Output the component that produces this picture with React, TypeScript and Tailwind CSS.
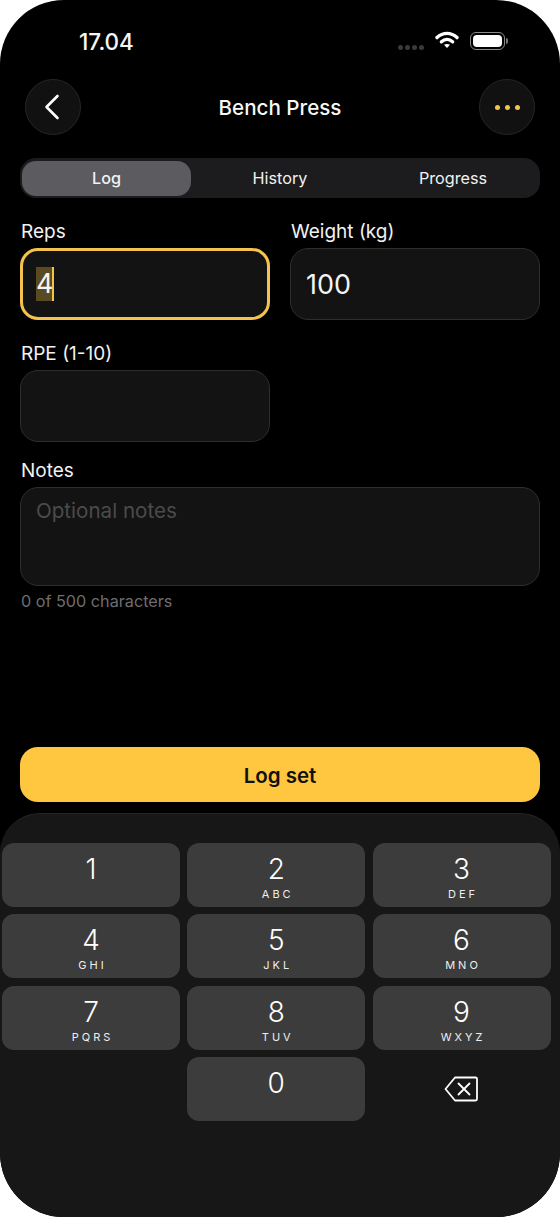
import React from 'react';

const keys = [
  { n: '1', l: '' },
  { n: '2', l: 'ABC' },
  { n: '3', l: 'DEF' },
  { n: '4', l: 'GHI' },
  { n: '5', l: 'JKL' },
  { n: '6', l: 'MNO' },
  { n: '7', l: 'PQRS' },
  { n: '8', l: 'TUV' },
  { n: '9', l: 'WXYZ' },
];

const Key: React.FC<{ n: string; l: string }> = ({ n, l }) => (
  <div className="h-[64px] rounded-[12px] bg-[#3c3c3c] flex flex-col items-center pt-[8px] text-white">
    <span className="text-[28px] leading-[36px] font-light">{n}</span>
    <span className="text-[11px] leading-[14px] tracking-[3px] pl-[3px] text-[#eeeeee]">{l}</span>
  </div>
);

const Field: React.FC<{ label: string; children?: React.ReactNode; focus?: boolean }> = ({ label, children, focus }) => (
  <div className="flex flex-col">
    <span className="text-[19px] leading-[24px] text-[#f2f2f2] pl-[1px] pt-[1px] mb-[4px]">{label}</span>
    <div className={`h-[72px] rounded-[18px] bg-[#131313] flex items-center text-[27px] text-[#f4f4f4] ${focus ? 'border-[3px] border-[#f5c34b] px-[13px]' : 'border border-[#2e2e2e] px-[15px] pt-[2px]'}`}>
      {children}
    </div>
  </div>
);

export default function App() {
  return (
    <div className="w-[560px] h-[1217px] bg-white font-['Inter',sans-serif]">
      <div className="w-full h-full bg-black rounded-[64px] overflow-hidden flex flex-col">
        {/* status bar */}
        <div className="h-[79px] shrink-0 flex justify-between pl-[79px] pr-[52px] pt-[27px]">
          <span className="text-[22.5px] leading-[30px] font-medium text-[#f5f5f5]">17.04</span>
          <div className="flex items-start gap-[9px] pt-[5px]">
            <div className="flex gap-[2px] mt-[13px] mr-[2px]">
              <span className="w-[5px] h-[5px] rounded-full bg-[#3a3a3a]" />
              <span className="w-[5px] h-[5px] rounded-full bg-[#3a3a3a]" />
              <span className="w-[5px] h-[5px] rounded-full bg-[#3a3a3a]" />
              <span className="w-[5px] h-[5px] rounded-full bg-[#3a3a3a]" />
            </div>
            <svg width="24" height="19" viewBox="0 0 24 19" fill="none" stroke="white" strokeWidth="3.4" strokeLinecap="round" className="mt-[-1px]">
              <path d="M2 6.6C8 1 16 1 22 6.6" />
              <path d="M6.4 10.8C9.8 7.8 14.2 7.8 17.6 10.8" />
              <path d="M12 17l-3-3.2c1.8-1.2 4.2-1.2 6 0z" fill="white" stroke="none" />
            </svg>
            <div className="flex items-center gap-[1px] ml-[2px]">
              <div className="w-[35px] h-[18px] rounded-[6px] border border-[#8a8a8a] p-[2px]">
                <div className="w-full h-full rounded-[4px] bg-white" />
              </div>
              <div className="w-[2px] h-[6px] rounded-r-full bg-[#777]" />
            </div>
          </div>
        </div>

        {/* header */}
        <div className="h-[56px] shrink-0 mx-[25px] flex items-center justify-between">
          <div className="w-[56px] h-[56px] rounded-full bg-[#111111] border border-[#262626] flex items-center justify-center pr-[2px]">
            <svg width="16" height="26" viewBox="0 0 16 26" fill="none" stroke="white" strokeWidth="2.6" strokeLinecap="round" strokeLinejoin="round">
              <path d="M13.5 2L2.5 13l11 11" />
            </svg>
          </div>
          <span className="text-[20.6px] font-medium text-[#f7f7f7] pt-[2px]">Bench Press</span>
          <div className="w-[56px] h-[56px] rounded-full bg-[#111111] border border-[#262626] flex items-center justify-center gap-[5px]">
            <span className="w-[5px] h-[5px] rounded-full bg-[#f5c34b]" />
            <span className="w-[5px] h-[5px] rounded-full bg-[#f5c34b]" />
            <span className="w-[5px] h-[5px] rounded-full bg-[#f5c34b]" />
          </div>
        </div>

        {/* tabs */}
        <div className="h-[40px] shrink-0 mx-[20px] mt-[23px] rounded-[16px] bg-[#1c1c1e] grid grid-cols-3 items-center px-[2px] text-[16.2px] text-[#f2f2f2]">
          <div className="w-[169px] h-[35px] rounded-[14px] bg-[#5b5b60] flex items-center justify-center font-medium">Log</div>
          <div className="text-center">History</div>
          <div className="text-center pl-[2px]">Progress</div>
        </div>

        {/* form */}
        <div className="flex-1 flex flex-col px-[20px] pt-[21px]">
          <div className="grid grid-cols-2 gap-x-[20px] gap-y-[21px]">
            <Field label="Reps" focus>
              <span className="relative bg-[#5a4a22] h-[34px] leading-[34px] w-[16px] text-center">
                4
                <span className="absolute right-[-2px] top-0 w-[2px] h-[34px] bg-[#f5c34b]" />
              </span>
            </Field>
            <Field label="Weight (kg)">100</Field>
            <Field label="RPE (1-10)" />
          </div>

          <span className="text-[19px] leading-[24px] text-[#f2f2f2] pl-[1px] pt-[1px] mt-[16px] mb-[4px]">Notes</span>
          <div className="h-[99px] rounded-[18px] bg-[#131313] border border-[#2e2e2e] px-[15px] pt-[9px] text-[20.6px] leading-[28px] text-[#4b4b4b]">
            Optional notes
          </div>
          <span className="text-[16.2px] leading-[22px] text-[#6e6e6e] mt-[4px] pl-[1px]">0 of 500 characters</span>

          <div className="mt-[135px] h-[55px] rounded-[18px] bg-[#ffc640] flex items-center justify-center pt-[3px] text-[20.5px] font-semibold text-[#111]">
            Log set
          </div>
        </div>

        {/* keypad */}
        <div className="h-[404px] shrink-0 rounded-t-[40px] bg-[#171717] border-t border-[#262626] px-[2px] pt-[29.1px]">
          <div className="grid grid-cols-[178px_178px_178px] gap-x-[7.25px] gap-y-[7.4px]">
            {keys.map(k => (
              <Key key={k.n} n={k.n} l={k.l} />
            ))}
            <div />
            <Key n="0" l="" />
            <div className="flex items-center justify-center pr-[2px]">
              <svg width="34" height="26" viewBox="0 0 34 26" fill="none" stroke="white" strokeWidth="1.8" strokeLinejoin="round" strokeLinecap="round">
                <path d="M11 1.5h20.5a1.5 1.5 0 0 1 1.5 1.5v20a1.5 1.5 0 0 1-1.5 1.5H11L1.5 13z" />
                <path d="M14.5 7.5l11 11M25.5 7.5l-11 11" />
              </svg>
            </div>
          </div>
        </div>
      </div>
    </div>
  );
}
